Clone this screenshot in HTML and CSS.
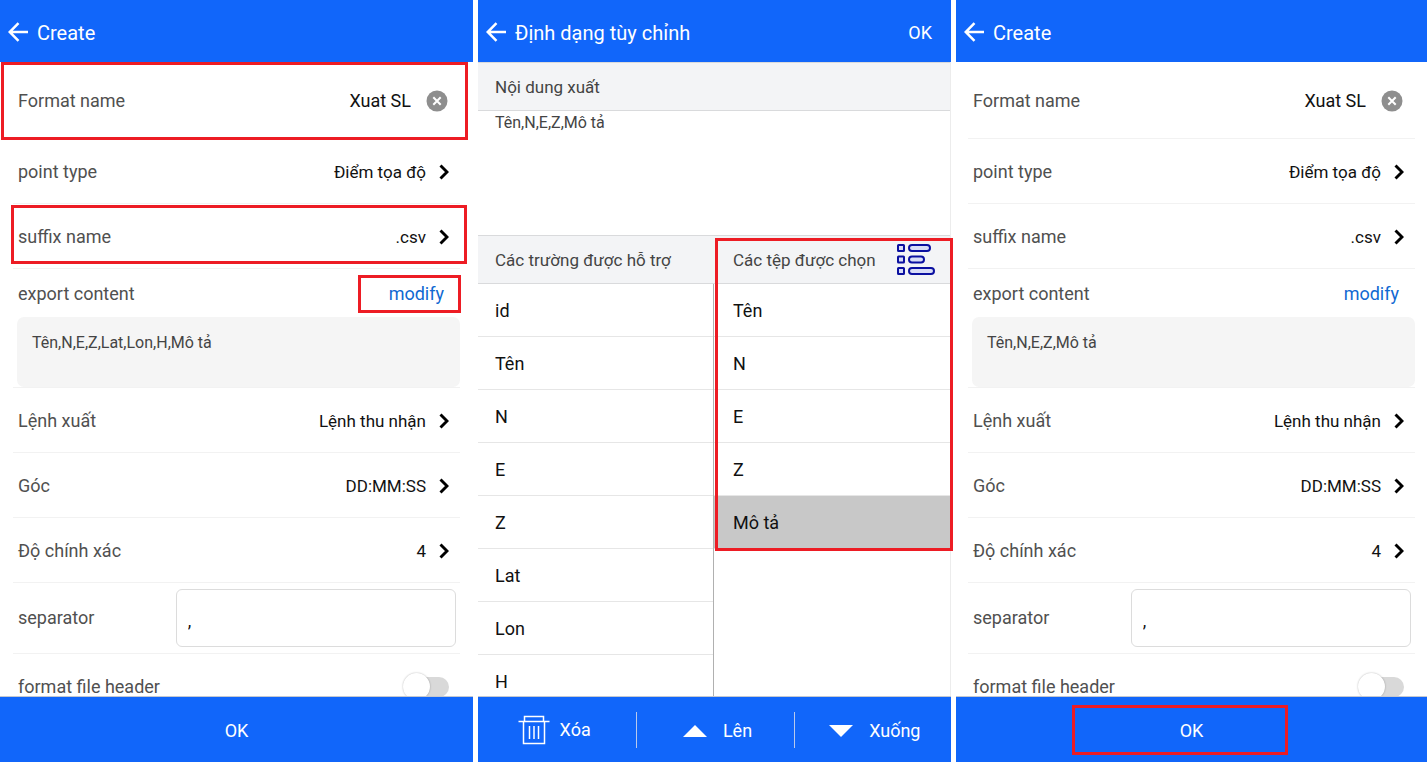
FILE: index.html
```html
<!DOCTYPE html>
<html lang="vi">
<head>
<meta charset="utf-8">
<meta name="viewport" content="width=device-width, initial-scale=1">
<title>Create</title>
<link rel="stylesheet" href="styles.css">
</head>
<body>
<svg class="sprite" aria-hidden="true">
  <symbol id="back" viewBox="0 0 20 20"><path d="M10.5 1.2 1.7 10l8.8 8.8M2 10h18" fill="none" stroke="currentColor" stroke-width="2.5"/></symbol>
  <symbol id="chevron" viewBox="0 0 10 16"><path d="M1.5 1.5 8 8l-6.500 6.500" fill="none" stroke="currentColor" stroke-width="2.900"/></symbol>
  <symbol id="clear" viewBox="0 0 22 22"><circle cx="11" cy="11" r="10.500" fill="#8e8e8e"/><path d="m7.300 7.300 7.400 7.400m0-7.400-7.400 7.400" stroke="#fff" stroke-width="2"/></symbol>
</svg>
<main class="screens">

  <section class="phone">
    <header class="topbar">
      <button class="back" type="button" aria-label="Back"><svg class="icon-back"><use href="#back"/></svg></button>
      <h1 class="title">Create</h1>
    </header>
    <form class="form" id="form-a">
      <div class="row row-name">
        <label for="a-name">Format name</label>
        <input class="name-input" id="a-name" type="text" value="Xuat SL">
        <button class="clear" type="button" aria-label="Clear"><svg class="icon-clear"><use href="#clear"/></svg></button>
        <span class="mark mark-name"></span>
      </div>
      <div class="row">
        <span id="a-type">point type</span>
        <button class="pick" type="button" aria-describedby="a-type">Điểm tọa độ<svg class="icon-chevron"><use href="#chevron"/></svg></button>
      </div>
      <div class="row">
        <span id="a-suffix">suffix name</span>
        <button class="pick" type="button" aria-describedby="a-suffix">.csv<svg class="icon-chevron"><use href="#chevron"/></svg></button>
        <span class="mark mark-suffix"></span>
      </div>
      <div class="export">
        <div class="export-head">
          <span>export content</span>
          <a class="modify" href="#modify">modify<span class="mark mark-modify"></span></a>
        </div>
        <p class="export-text">Tên,N,E,Z,Lat,Lon,H,Mô tả</p>
      </div>
      <div class="row">
        <span id="a-order">Lệnh xuất</span>
        <button class="pick" type="button" aria-describedby="a-order">Lệnh thu nhận<svg class="icon-chevron"><use href="#chevron"/></svg></button>
      </div>
      <div class="row">
        <span id="a-angle">Góc</span>
        <button class="pick" type="button" aria-describedby="a-angle">DD:MM:SS<svg class="icon-chevron"><use href="#chevron"/></svg></button>
      </div>
      <div class="row">
        <span id="a-precision">Độ chính xác</span>
        <button class="pick" type="button" aria-describedby="a-precision">4<svg class="icon-chevron"><use href="#chevron"/></svg></button>
      </div>
      <div class="row row-separator">
        <label for="a-separator">separator</label>
        <input class="separator-input" id="a-separator" type="text" value=",">
      </div>
      <div class="row">
        <label for="a-header">format file header</label>
        <input class="toggle" id="a-header" type="checkbox">
      </div>
    </form>
    <footer class="bottombar">
      <button class="confirm" type="submit" form="form-a">OK</button>
    </footer>
  </section>

  <section class="phone">
    <header class="topbar">
      <button class="back" type="button" aria-label="Back"><svg class="icon-back"><use href="#back"/></svg></button>
      <h1 class="title">Định dạng tùy chỉnh</h1>
      <button class="top-ok" type="button">OK</button>
    </header>
    <div class="custom">
      <h2 class="band"><label for="content">Nội dung xuất</label></h2>
      <textarea class="content" id="content">Tên,N,E,Z,Mô tả</textarea>
      <div class="columns">
        <div class="column">
          <h2 class="band">Các trường được hỗ trợ</h2>
          <ul class="fields fields-all">
            <li>id</li><li>Tên</li><li>N</li><li>E</li><li>Z</li><li>Lat</li><li>Lon</li><li>H</li>
          </ul>
        </div>
        <div class="column">
          <div class="chosen">
            <h2 class="band">Các tệp được chọn
              <svg class="icon-list" viewBox="0 0 40 34" aria-hidden="true">
                <g fill="#d9ddf7" stroke="#0b10a0" stroke-width="2">
                  <rect x="2" y="2" width="6" height="6" rx=".5"/><rect x="13" y="2" width="21" height="6" rx="3"/>
                  <rect x="2" y="13.500" width="6" height="6" rx=".5"/><rect x="13" y="13.500" width="15" height="6" rx="3"/>
                  <rect x="2" y="25" width="6" height="6" rx=".5"/><rect x="13" y="25" width="25" height="6" rx="3"/>
                </g>
              </svg>
            </h2>
            <ul class="fields">
              <li>Tên</li><li>N</li><li>E</li><li>Z</li><li class="selected">Mô tả</li>
            </ul>
            <span class="mark mark-chosen"></span>
          </div>
        </div>
      </div>
    </div>
    <footer class="bottombar actions">
      <button class="action action-delete" type="button">
        <svg class="icon-trash" viewBox="0 0 32 30" aria-hidden="true"><path d="M.5 6.500h31M6.500 6.500V1.500h19v5M5.500 6.500v22h21v-22M11.500 11v13M16 11v13M20.500 11v13" fill="none" stroke="#fff" stroke-width="1.500"/></svg>
        Xóa
      </button>
      <button class="action" type="button">
        <svg class="icon-move" viewBox="0 0 24 12" aria-hidden="true"><path d="M12 0 24 12H0z" fill="#fff"/></svg>
        Lên
      </button>
      <button class="action" type="button">
        <svg class="icon-move" viewBox="0 0 24 12" aria-hidden="true"><path d="M0 0h24L12 12z" fill="#fff"/></svg>
        Xuống
      </button>
    </footer>
  </section>

  <section class="phone">
    <header class="topbar">
      <button class="back" type="button" aria-label="Back"><svg class="icon-back"><use href="#back"/></svg></button>
      <h1 class="title">Create</h1>
    </header>
    <form class="form form-last" id="form-b">
      <div class="row row-name">
        <label for="b-name">Format name</label>
        <input class="name-input" id="b-name" type="text" value="Xuat SL">
        <button class="clear" type="button" aria-label="Clear"><svg class="icon-clear"><use href="#clear"/></svg></button>
      </div>
      <div class="row">
        <span id="b-type">point type</span>
        <button class="pick" type="button" aria-describedby="b-type">Điểm tọa độ<svg class="icon-chevron"><use href="#chevron"/></svg></button>
      </div>
      <div class="row">
        <span id="b-suffix">suffix name</span>
        <button class="pick" type="button" aria-describedby="b-suffix">.csv<svg class="icon-chevron"><use href="#chevron"/></svg></button>
      </div>
      <div class="export">
        <div class="export-head">
          <span>export content</span>
          <a class="modify" href="#modify">modify</a>
        </div>
        <p class="export-text">Tên,N,E,Z,Mô tả</p>
      </div>
      <div class="row">
        <span id="b-order">Lệnh xuất</span>
        <button class="pick" type="button" aria-describedby="b-order">Lệnh thu nhận<svg class="icon-chevron"><use href="#chevron"/></svg></button>
      </div>
      <div class="row">
        <span id="b-angle">Góc</span>
        <button class="pick" type="button" aria-describedby="b-angle">DD:MM:SS<svg class="icon-chevron"><use href="#chevron"/></svg></button>
      </div>
      <div class="row">
        <span id="b-precision">Độ chính xác</span>
        <button class="pick" type="button" aria-describedby="b-precision">4<svg class="icon-chevron"><use href="#chevron"/></svg></button>
      </div>
      <div class="row row-separator">
        <label for="b-separator">separator</label>
        <input class="separator-input" id="b-separator" type="text" value=",">
      </div>
      <div class="row">
        <label for="b-header">format file header</label>
        <input class="toggle" id="b-header" type="checkbox">
      </div>
    </form>
    <footer class="bottombar">
      <button class="confirm" type="submit" form="form-b">OK<span class="mark mark-confirm"></span></button>
    </footer>
  </section>

</main>
</body>
</html>
```

FILE: styles.css
```css
* { box-sizing: border-box; }

body {
  margin: 0;
  background: #fff;
  color: #111;
  font-family: Roboto, "Noto Sans", sans-serif;
  font-size: 18px;
  line-height: 24px;
}

button, input, textarea {
  margin: 0;
  padding: 0;
  border: 0;
  background: none;
  color: inherit;
  font: inherit;
}

h1, h2, p, ul { margin: 0; padding: 0; font-weight: 400; }
svg { display: block; flex: none; }
.sprite { position: absolute; width: 0; height: 0; }

.screens {
  display: grid;
  grid-template-columns: 473fr 473fr 471fr;
  gap: 5px;
  height: 100vh;
}

.phone {
  display: flex;
  flex-direction: column;
  min-width: 0;
  min-height: 0;
}

/* Bars */
.topbar {
  display: flex;
  align-items: center;
  gap: 9px;
  flex: none;
  height: 62px;
  padding: 4px 19px 0 8px;
  background: #1166fa;
  color: #fff;
}
.back { padding-bottom: 2px; }
.icon-back { width: 20px; height: 20px; }
.title { flex: 1; font-size: 20px; }
.top-ok { font-size: 18px; }

.bottombar {
  display: flex;
  flex: none;
  height: 66px;
  border-top: 1px solid #c4c8d0;
  background: #1166fa;
  color: #fff;
}
.confirm { position: relative; flex: 1; padding-top: 2px; }

/* Form */
.form {
  flex: 1;
  min-height: 0;
  overflow: hidden auto;
  scrollbar-width: none;
  padding: 0 13px;
  color: #505050;
}
.form-last { padding: 0 12px; }

.row {
  position: relative;
  display: flex;
  align-items: center;
  justify-content: space-between;
  height: 65px;
  padding: 2px 11px 0 5px;
  border-bottom: 1px solid #f2f2f2;
  line-height: 20px;
}
.row-name { height: 77px; }
.row-separator { height: 71px; padding: 0 4px 0 5px; }

.name-input {
  flex: 1;
  min-width: 0;
  margin-right: 15px;
  color: #111;
  text-align: right;
}
.row-name { padding-right: 12px; }
.icon-clear { width: 22px; height: 22px; }

.pick {
  display: flex;
  align-items: center;
  gap: 13px;
  color: #111;
  font-size: 17px;
}
.icon-chevron { width: 10px; height: 16px; color: #000; }

.export { padding-left: 4px; border-bottom: 1px solid #f2f2f2; }
.export-head {
  display: flex;
  align-items: center;
  justify-content: space-between;
  height: 48px;
  padding: 2px 16px 0 1px;
}
.modify { position: relative; color: #1069d2; text-decoration: none; }
.export-text {
  height: 70px;
  padding: 14px 15px;
  border-radius: 7px;
  background: #f5f5f5;
  color: #444;
  font-size: 16px;
}

.separator-input {
  width: 64%;
  height: 58px;
  padding: 4px 11px 0;
  border: 1px solid #dcdcdc;
  border-radius: 6px;
  color: #111;
}

.toggle {
  position: relative;
  appearance: none;
  width: 34px;
  height: 20px;
  border-radius: 10px;
  background: #d9d9d9;
}
.toggle::before {
  content: "";
  position: absolute;
  top: -4px;
  left: -12px;
  width: 27px;
  height: 27px;
  border-radius: 50%;
  background: #fff;
  box-shadow: 0 0 2px rgba(0, 0, 0, .3);
}

/* Custom format */
.custom {
  display: flex;
  flex: 1;
  flex-direction: column;
  min-height: 0;
  border-right: 1px solid #ececec;
}
.band {
  display: flex;
  align-items: center;
  justify-content: space-between;
  flex: none;
  height: 49px;
  padding: 1px 14px 0 17px;
  border: solid #d9dadc;
  border-width: 1px 0;
  background: #f3f4f6;
  color: #444;
  font-size: 17px;
}
.content {
  flex: none;
  height: 124px;
  padding: 0 17px;
  resize: none;
  color: #444;
  font-size: 16px;
}
.columns {
  display: grid;
  flex: 1;
  grid-template-columns: 1fr 1fr;
  min-height: 0;
}
.column { display: flex; flex-direction: column; min-width: 0; min-height: 0; }
.chosen { position: relative; }
.chosen .band, .chosen li { padding-left: 19px; }
.fields { list-style: none; }
.fields-all {
  flex: 1;
  min-height: 0;
  overflow: hidden auto;
  scrollbar-width: none;
  border-right: 1px solid #b0b0b0;
}
.fields li {
  display: flex;
  align-items: center;
  height: 53px;
  padding-top: 1px;
  padding-right: 17px;
  border-bottom: 1px solid #e6e6e6;
}
.fields-all li { padding-left: 17px; }
.fields .selected { background: #c8c8c8; }
.icon-list { width: 40px; height: 34px; }

.action {
  display: flex;
  flex: 1;
  align-items: center;
  justify-content: center;
  gap: 16px;
  height: 36px;
  padding: 2px 0 0 4px;
}
.actions { align-items: center; }
.action + .action { border-left: 1px solid #b9c9ec; }
.action-delete { gap: 10px; padding: 0 6px 0 0; }
.icon-trash { width: 32px; height: 30px; }
.icon-move { width: 24px; height: 12px; }

/* Highlight frames */
.mark {
  position: absolute;
  z-index: 1;
  border: 3px solid #ed1c24;
  pointer-events: none;
}
.mark-name { inset: 0 -8px -2px -12px; }
.mark-suffix { inset: 1px -7px 4px -2px; }
.mark-modify { inset: -7px -17px -7px -31px; }
.mark-chosen { inset: 3px -3px -2px 1px; }
.mark-confirm { inset: 8px 139px 7px 116px; }
```
